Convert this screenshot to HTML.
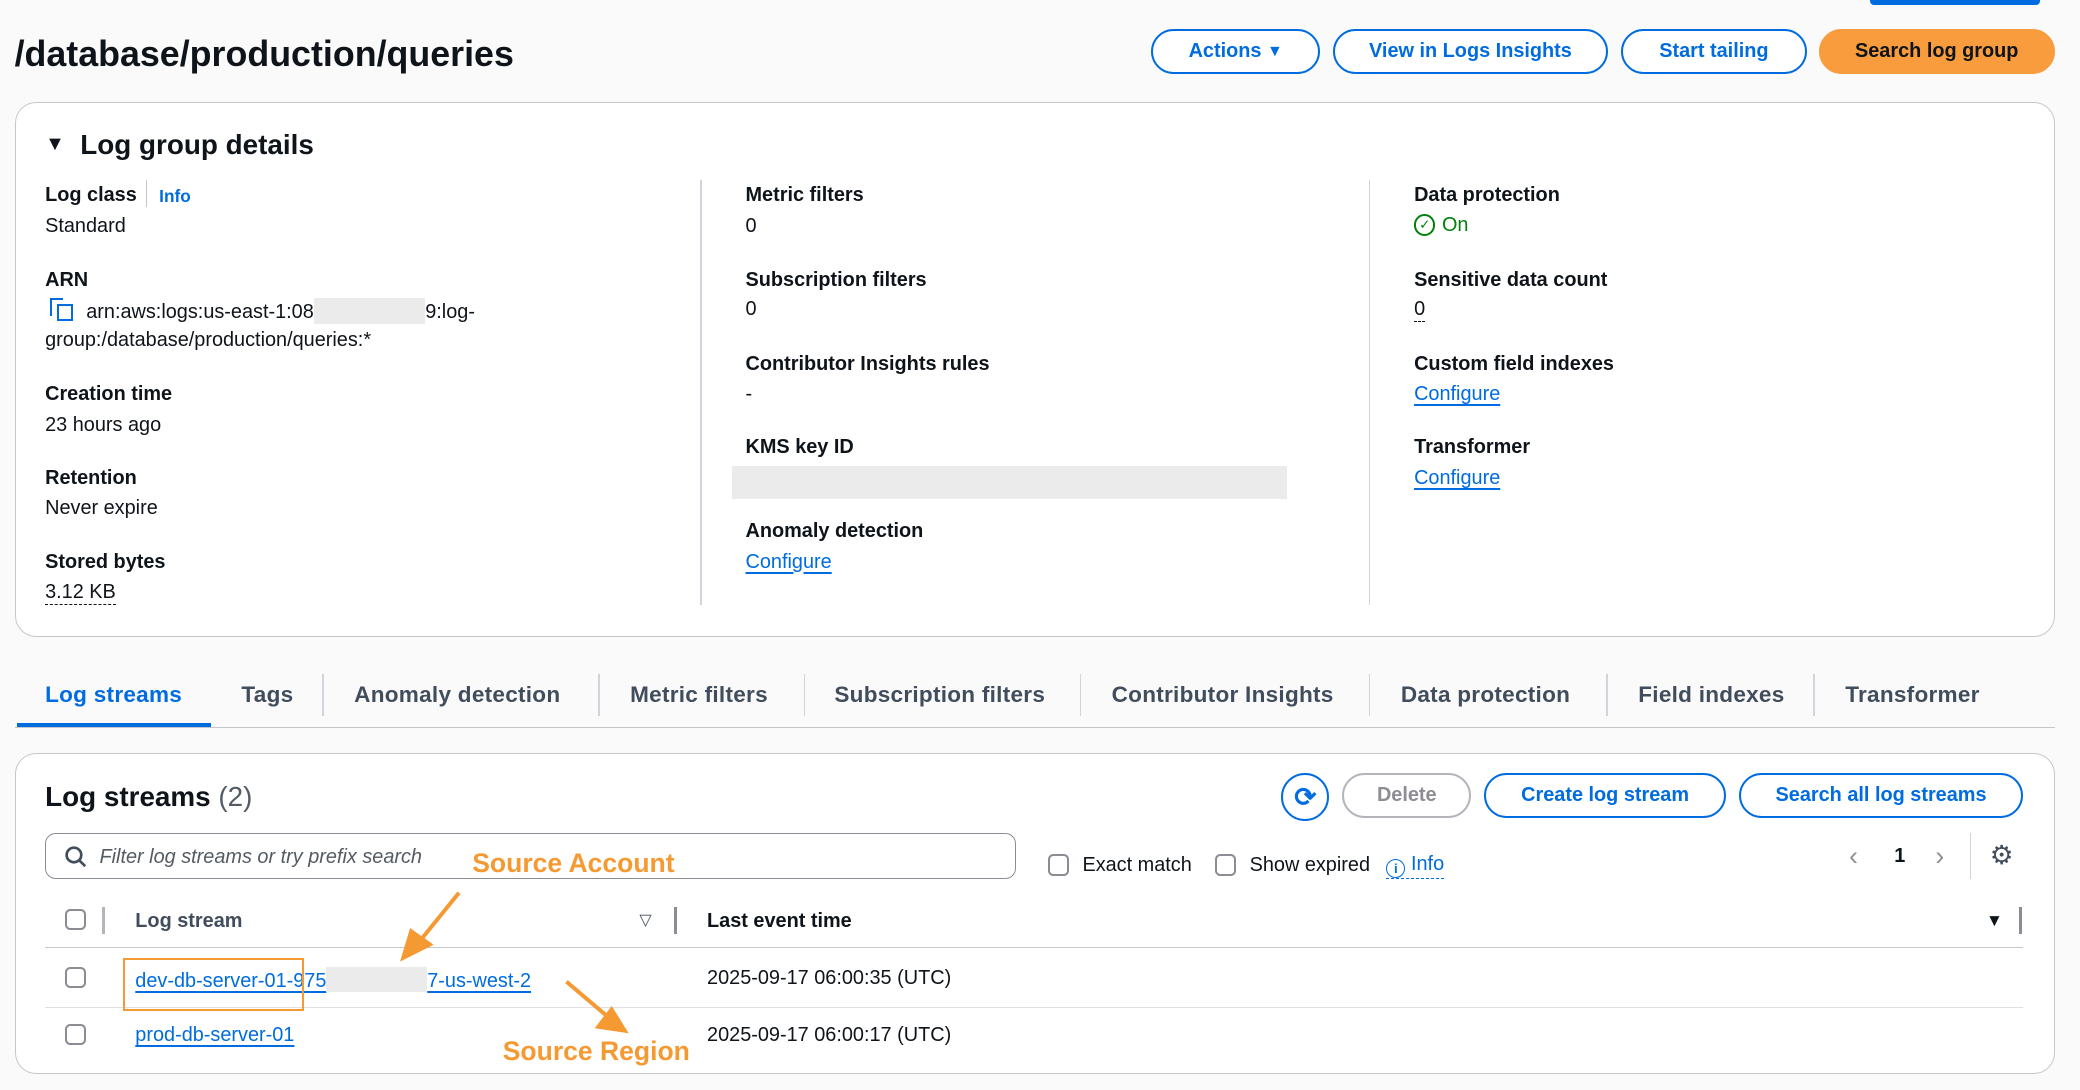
<!DOCTYPE html>
<html><head><meta charset="utf-8"><style>
html,body{margin:0;padding:0;background:#fafafa;width:2080px;height:1090px;overflow:hidden}
#w{zoom:1.32653;position:relative;width:1568px;height:822px;font-family:"Liberation Sans",sans-serif;color:#0f141a;font-size:15px}
.a{position:absolute;white-space:nowrap}
.b{font-weight:bold}
.btn{position:absolute;height:34px;border:2px solid #006ce0;border-radius:18px;color:#006ce0;font-weight:bold;font-size:15px;display:flex;align-items:center;justify-content:center;box-sizing:border-box;background:#fff}
.card{position:absolute;background:#fff;border:1px solid #c6c6cd;border-radius:16px;box-sizing:border-box}
.lnk{color:#006ce0;text-decoration:underline;text-underline-offset:3px;text-decoration-thickness:1.5px}
.vl{position:absolute;width:1px;background:#d1d5db}
.cb{position:absolute;width:16px;height:16px;border:2px solid #8c8c94;border-radius:4px;box-sizing:border-box;background:#fff}
.tab{position:absolute;top:514px;font-size:17px;font-weight:bold;color:#414d5c;letter-spacing:0.2px}
.gr{position:absolute;background:#ebebeb}
.or{color:#f59a33;font-weight:bold;font-size:20px}
</style></head><body><div id="w">
<div class="a" style="left:1410px;top:0;width:128px;height:4px;background:#006ce0;border-radius:0 0 3px 3px"></div>
<div class="a b" style="left:11px;top:26px;font-size:27px">/database/production/queries</div>
<div class="btn" style="left:868px;top:22px;width:127px">Actions&nbsp;<span style="font-size:12px">▼</span></div>
<div class="btn" style="left:1005px;top:22px;width:207px">View in Logs Insights</div>
<div class="btn" style="left:1222px;top:22px;width:140px">Start tailing</div>
<div class="btn" style="left:1371px;top:22px;width:178px;background:#f89c3e;border-color:#f89c3e;color:#0f141a">Search log group</div>

<div class="card" style="left:11px;top:77px;width:1538px;height:403px"></div>
<div class="a b" style="left:34px;top:97px;font-size:21px"><span style="font-size:15px;position:relative;top:-3px">▼</span>&nbsp; Log group details</div>
<div class="vl" style="left:528px;top:136px;height:320px"></div>
<div class="vl" style="left:1032px;top:136px;height:320px"></div>

<div class="a b" style="left:34px;top:139px">Log class</div>
<div class="a" style="left:110px;top:136px;width:1px;height:20px;background:#c6c6cd"></div>
<div class="a b" style="left:120px;top:140px;font-size:13px;color:#006ce0">Info</div>
<div class="a" style="left:34px;top:162px">Standard</div>
<div class="a b" style="left:34px;top:203px">ARN</div>
<div class="a" style="left:38px;top:225px;width:8px;height:12px;border-left:2px solid #006ce0;border-top:2px solid #006ce0"></div>
<div class="a" style="left:43px;top:229px;width:9px;height:10px;border:2px solid #006ce0"></div>
<div class="a" style="left:65px;top:225px">arn:aws:logs:us-east-1:08<span style="display:inline-block;width:84px;height:19px;background:#ebebeb;vertical-align:-4px"></span>9:log-</div>
<div class="a" style="left:34px;top:248px">group:/database/production/queries:*</div>
<div class="a b" style="left:34px;top:289px">Creation time</div>
<div class="a" style="left:34px;top:312px">23 hours ago</div>
<div class="a b" style="left:34px;top:352px">Retention</div>
<div class="a" style="left:34px;top:375px">Never expire</div>
<div class="a b" style="left:34px;top:415px">Stored bytes</div>
<div class="a" style="left:34px;top:438px;border-bottom:1px dashed #0f141a">3.12 KB</div>

<div class="a b" style="left:562px;top:139px">Metric filters</div>
<div class="a" style="left:562px;top:162px">0</div>
<div class="a b" style="left:562px;top:203px">Subscription filters</div>
<div class="a" style="left:562px;top:225px">0</div>
<div class="a b" style="left:562px;top:266px">Contributor Insights rules</div>
<div class="a" style="left:562px;top:289px">-</div>
<div class="a b" style="left:562px;top:329px">KMS key ID</div>
<div class="gr" style="left:552px;top:351px;width:418px;height:25px"></div>
<div class="a b" style="left:562px;top:392px">Anomaly detection</div>
<div class="a lnk" style="left:562px;top:415px">Configure</div>

<div class="a b" style="left:1066px;top:139px">Data protection</div>
<div class="a" style="left:1066px;top:161px;color:#037f0c;display:flex;align-items:center;gap:5px"><span style="display:inline-block;width:13px;height:13px;border:2px solid #037f0c;border-radius:50%;font-size:10px;line-height:13px;text-align:center">✓</span>On</div>
<div class="a b" style="left:1066px;top:203px">Sensitive data count</div>
<div class="a" style="left:1066px;top:225px;border-bottom:1px dashed #0f141a">0</div>
<div class="a b" style="left:1066px;top:266px">Custom field indexes</div>
<div class="a lnk" style="left:1066px;top:289px">Configure</div>
<div class="a b" style="left:1066px;top:329px">Transformer</div>
<div class="a lnk" style="left:1066px;top:352px">Configure</div>

<div class="tab" style="left:34px;color:#006ce0">Log streams</div>
<div class="a" style="left:13px;top:545px;width:146px;height:4px;background:#006ce0"></div>
<div class="a" style="left:11px;top:548px;width:1538px;height:1px;background:#c6c6cd"></div>
<div class="tab" style="left:182px">Tags</div>
<div class="tab" style="left:267px">Anomaly detection</div>
<div class="tab" style="left:475px">Metric filters</div>
<div class="tab" style="left:629px">Subscription filters</div>
<div class="tab" style="left:838px">Contributor Insights</div>
<div class="tab" style="left:1056px">Data protection</div>
<div class="tab" style="left:1235px">Field indexes</div>
<div class="tab" style="left:1391px">Transformer</div>
<div class="vl" style="left:243px;top:508px;height:32px"></div>
<div class="vl" style="left:451px;top:508px;height:32px"></div>
<div class="vl" style="left:606px;top:508px;height:32px"></div>
<div class="vl" style="left:814px;top:508px;height:32px"></div>
<div class="vl" style="left:1032px;top:508px;height:32px"></div>
<div class="vl" style="left:1211px;top:508px;height:32px"></div>
<div class="vl" style="left:1367px;top:508px;height:32px"></div>

<div class="card" style="left:11px;top:568px;width:1538px;height:242px"></div>
<div class="a b" style="left:34px;top:589px;font-size:21px">Log streams <span style="font-weight:normal;color:#545b64">(2)</span></div>
<div class="btn" style="left:966px;top:583px;width:36px;height:36px;font-size:20px">⟳</div>
<div class="btn" style="left:1012px;top:583px;width:97px;border-color:#b4b4bb;color:#8d8d94">Delete</div>
<div class="btn" style="left:1119px;top:583px;width:182px">Create log stream</div>
<div class="btn" style="left:1311px;top:583px;width:214px">Search all log streams</div>
<div class="a" style="left:34px;top:628px;width:732px;height:35px;border:1px solid #8c8c94;border-radius:8px;box-sizing:border-box;background:#fff"></div>
<svg class="a" style="left:48px;top:637px" width="18" height="18" viewBox="0 0 18 18"><circle cx="7.5" cy="7.5" r="5.5" fill="none" stroke="#414d5c" stroke-width="2"/><path d="M11.5 11.5L16 16" stroke="#414d5c" stroke-width="2"/></svg>
<div class="a" style="left:75px;top:638px;font-style:italic;color:#545b64">Filter log streams or try prefix search</div>
<div class="a or" style="left:356px;top:639px">Source Account</div>
<div class="cb" style="left:790px;top:644px"></div>
<div class="a" style="left:816px;top:644px">Exact match</div>
<div class="cb" style="left:916px;top:644px"></div>
<div class="a" style="left:942px;top:644px">Show expired</div>
<div class="a" style="left:1045px;top:643px;color:#006ce0;border-bottom:1px dashed #006ce0"><span style="display:inline-block;width:13px;height:13px;border:1.5px solid #006ce0;border-radius:50%;font-size:10px;line-height:13px;text-align:center;font-weight:bold;vertical-align:-2px">i</span> Info</div>
<div class="a" style="left:1394px;top:634px;font-size:20px;color:#8d8d94">‹</div>
<div class="a b" style="left:1428px;top:637px">1</div>
<div class="a" style="left:1459px;top:634px;font-size:20px;color:#8d8d94">›</div>
<div class="vl" style="left:1485px;top:628px;height:35px"></div>
<div class="a" style="left:1500px;top:633px;font-size:20px;color:#414d5c">⚙</div>

<div class="cb" style="left:49px;top:685px"></div>
<div class="a" style="left:77px;top:684px;width:2px;height:20px;background:#b4b4bb"></div>
<div class="a b" style="left:102px;top:686px;color:#414d5c">Log stream</div>
<div class="a" style="left:482px;top:686px;font-size:12px;color:#414d5c">▽</div>
<div class="a" style="left:508px;top:684px;width:2px;height:20px;background:#8c8c94"></div>
<div class="a b" style="left:533px;top:686px">Last event time</div>
<div class="a" style="left:1497px;top:686px;font-size:13px">▼</div>
<div class="a" style="left:1522px;top:684px;width:2px;height:20px;background:#8c8c94"></div>
<div class="a" style="left:34px;top:714px;width:1491px;height:1px;background:#c6c6cd"></div>
<div class="a" style="left:34px;top:759px;width:1491px;height:1px;background:#e0e0e4"></div>

<div class="cb" style="left:49px;top:729px"></div>
<div class="a lnk" style="left:102px;top:729px">dev-db-server-01-975<span style="display:inline-block;width:76px;height:19px;background:#ebebeb;vertical-align:-4px"></span>7-us-west-2</div>
<div class="a" style="left:93px;top:722px;width:136px;height:40px;border:2px solid #f59a33;box-sizing:border-box"></div>
<div class="a" style="left:533px;top:729px">2025-09-17 06:00:35 (UTC)</div>
<div class="cb" style="left:49px;top:772px"></div>
<div class="a lnk" style="left:102px;top:772px">prod-db-server-01</div>
<div class="a" style="left:533px;top:772px">2025-09-17 06:00:17 (UTC)</div>
<div class="a or" style="left:379px;top:781px">Source Region</div>
<svg class="a" style="left:0;top:0" width="1568" height="822"><g stroke="#f59a33" stroke-width="3" fill="#f59a33"><path d="M346 673L316 710"/><path d="M304 722l6-20 14 10z"/><path d="M427 740L460 768"/><path d="M471 777l-20-3 10-13z"/></g></svg>
</div></body></html>
